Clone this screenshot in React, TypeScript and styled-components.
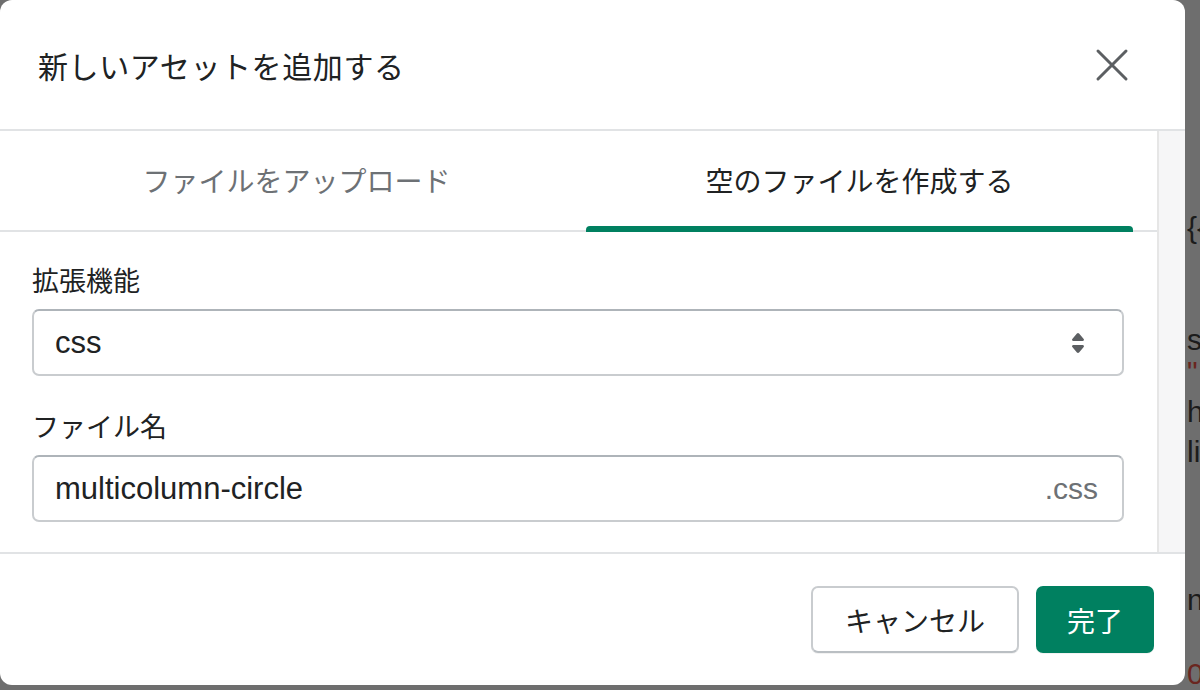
import React from "react";
import styled, { createGlobalStyle } from "styled-components";

const GlobalStyle = createGlobalStyle`
  html, body {
    margin: 0;
    padding: 0;
    background: #6e6e6e;
  }
  * {
    box-sizing: border-box;
  }
`;

const JP = `"Liberation Sans", "Noto Sans CJK JP", sans-serif`;

const Screen = styled.div`
  position: relative;
  width: 1200px;
  height: 690px;
  overflow: hidden;
  background: #6e6e6e;
  font-family: ${JP};
`;

// the code editor that sits under the dimmed backdrop
const CodeBehind = styled.div`
  display: flex;
  flex-direction: column;
  padding-left: 1187px;
  font-family: "Liberation Sans", sans-serif;
  font-size: 30px;
  line-height: 40px;
  white-space: nowrap;
`;

const CodeLine = styled.div<{ $space: number; $red?: boolean }>`
  margin-top: ${(p) => p.$space}px;
  color: ${(p) => (p.$red ? "#6a2620" : "#1c1c1c")};
`;

const Modal = styled.div`
  position: absolute;
  top: 0;
  left: 0;
  width: 1185px;
  height: 685px;
  display: flex;
  flex-direction: column;
  background: #fff;
  border-radius: 12px;
  overflow: hidden;
`;

const Header = styled.div`
  height: 131px;
  flex-shrink: 0;
  display: flex;
  align-items: center;
  justify-content: space-between;
  padding: 0 56px 0 38px;
  border-bottom: 2px solid #e1e3e5;
`;

const Title = styled.h2`
  margin: 0;
  font-size: 30px;
  font-weight: 400;
  color: #202223;
  letter-spacing: 0.6px;
`;

const CloseButton = styled.button`
  display: flex;
  padding: 0;
  border: none;
  background: none;
  cursor: pointer;
`;

const Body = styled.div`
  display: flex;
  height: 423px;
  flex-shrink: 0;
  border-bottom: 2px solid #e1e3e5;
`;

const Main = styled.div`
  flex: 1;
  display: flex;
  flex-direction: column;
`;

const ScrollTrack = styled.div`
  width: 28px;
  background: #f6f6f7;
  border-left: 2px solid #e6e6e6;
`;

const Tabs = styled.div`
  display: grid;
  grid-template-columns: 1fr 1fr;
  column-gap: 16px;
  height: 101px;
  padding: 0 24px 0 23px;
  border-bottom: 2px solid #e1e3e5;
`;

const Tab = styled.div<{ $active?: boolean }>`
  position: relative;
  display: flex;
  align-items: center;
  justify-content: center;
  padding-bottom: 2px;
  font-size: 28px;
  color: ${(p) => (p.$active ? "#202223" : "#6d7175")};
  cursor: pointer;

  &::after {
    content: "";
    display: ${(p) => (p.$active ? "block" : "none")};
    position: absolute;
    left: 0;
    right: 0;
    bottom: -2px;
    height: 6px;
    border-radius: 4px 4px 0 0;
    background: #008060;
  }
`;

const Form = styled.div`
  display: flex;
  flex-direction: column;
  gap: 34px;
  padding: 32px 33px 0 32px;
`;

const Field = styled.div`
  display: flex;
  flex-direction: column;
  gap: 9px;
`;

const Label = styled.label`
  font-size: 27px;
  line-height: 36px;
  color: #202223;
`;

const Control = styled.div`
  display: flex;
  align-items: center;
  height: 67px;
  padding: 0 24px 0 21px;
  border: 2px solid #c9cccf;
  border-top-color: #aeb4b9;
  border-radius: 7px;
  background: #fff;
`;

const ControlText = styled.span`
  flex: 1;
  font-family: "Liberation Sans", sans-serif;
  font-size: 31px;
  color: #202223;
`;

const TextInput = styled.input`
  flex: 1;
  min-width: 0;
  padding: 0;
  border: none;
  outline: none;
  background: transparent;
  font-family: "Liberation Sans", sans-serif;
  font-size: 31px;
  color: #202223;
`;

const Suffix = styled.span`
  font-family: "Liberation Sans", sans-serif;
  font-size: 30px;
  color: #6d7175;
`;

const Footer = styled.div`
  flex: 1;
  display: flex;
  align-items: center;
  justify-content: flex-end;
  gap: 17px;
  padding: 0 31px 0 0;
`;

const Button = styled.button<{ $primary?: boolean }>`
  height: 67px;
  padding: 0 ${(p) => (p.$primary ? 29 : 32)}px;
  border-radius: 7px;
  font-family: ${JP};
  font-size: 28px;
  cursor: pointer;
  color: ${(p) => (p.$primary ? "#fff" : "#202223")};
  background: ${(p) => (p.$primary ? "#008060" : "#fff")};
  border: 2px solid ${(p) => (p.$primary ? "#008060" : "#c9cccf")};
  border-bottom-color: ${(p) => (p.$primary ? "#008060" : "#babfc3")};
  box-shadow: 0 1px 0 rgba(0, 0, 0, 0.05);
`;

const codeLines = [
  { text: "{{", space: 208 },
  { text: "s", space: 72 },
  { text: "\"", space: -8, red: true },
  { text: "h", space: 0 },
  { text: "liv", space: 0 },
  { text: "n.", space: 108 },
  { text: "0", space: 34, red: true },
];

const CloseIcon = () => (
  <svg width="34" height="34" viewBox="0 0 34 34" fill="none">
    <path
      d="M3 3L31 31M31 3L3 31"
      stroke="#5c5f62"
      strokeWidth="3"
      strokeLinecap="round"
    />
  </svg>
);

const SelectIcon = () => (
  <svg width="40" height="40" viewBox="0 0 20 20" fill="#5c5f62">
    <path d="M7.676 9h4.648c.563 0 .879-.603.53-1.014l-2.323-2.746a.708.708 0 0 0-1.062 0l-2.324 2.746c-.347.411-.032 1.014.531 1.014Zm4.648 2h-4.648c-.563 0-.878.603-.53 1.014l2.323 2.746c.27.32.792.32 1.062 0l2.323-2.746c.349-.411.033-1.014-.53-1.014Z" />
  </svg>
);

export default function App() {
  return (
    <Screen>
      <GlobalStyle />
      <CodeBehind>
        {codeLines.map((line, i) => (
          <CodeLine key={i} $space={line.space} $red={line.red}>
            {line.text}
          </CodeLine>
        ))}
      </CodeBehind>

      <Modal>
        <Header>
          <Title>新しいアセットを追加する</Title>
          <CloseButton aria-label="閉じる">
            <CloseIcon />
          </CloseButton>
        </Header>

        <Body>
          <Main>
            <Tabs>
              <Tab>ファイルをアップロード</Tab>
              <Tab $active>空のファイルを作成する</Tab>
            </Tabs>
            <Form>
              <Field>
                <Label>拡張機能</Label>
                <Control>
                  <ControlText>css</ControlText>
                  <SelectIcon />
                </Control>
              </Field>
              <Field>
                <Label>ファイル名</Label>
                <Control>
                  <TextInput defaultValue="multicolumn-circle" />
                  <Suffix>.css</Suffix>
                </Control>
              </Field>
            </Form>
          </Main>
          <ScrollTrack />
        </Body>

        <Footer>
          <Button>キャンセル</Button>
          <Button $primary>完了</Button>
        </Footer>
      </Modal>
    </Screen>
  );
}
